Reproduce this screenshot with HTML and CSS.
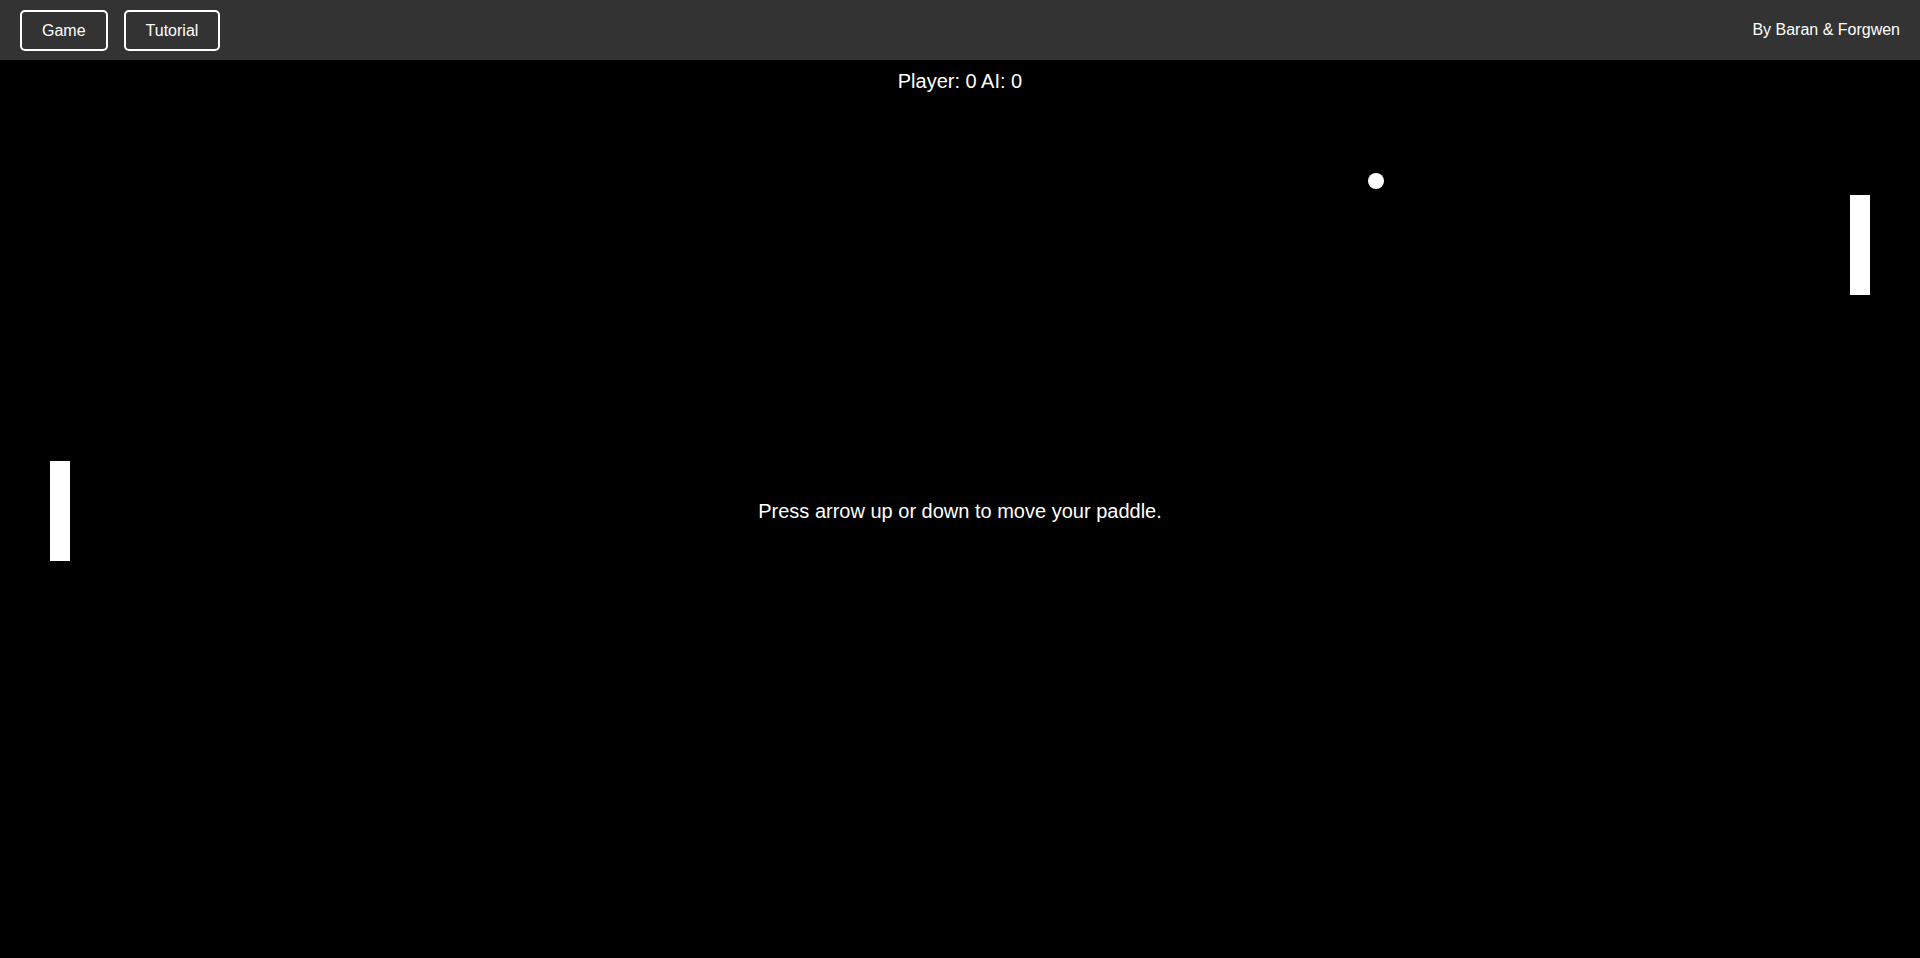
FILE: index.html
```html
<!DOCTYPE html>
<html lang="en">
<head>
<meta charset="utf-8">
<title>Pong</title>
<link rel="stylesheet" href="styles.css">
</head>
<body>
<header class="topbar">
  <nav class="nav">
    <button class="nav-btn">Game</button>
    <button class="nav-btn">Tutorial</button>
  </nav>
  <div class="credits">By Baran &amp; Forgwen</div>
</header>
<main class="game">
  <div class="score">Player: 0 AI: 0</div>
  <div class="paddle paddle-left"></div>
  <div class="paddle paddle-right"></div>
  <div class="ball"></div>
  <div class="hint">Press arrow up or down to move your paddle.</div>
</main>
</body>
</html>
```

FILE: styles.css
```css
html, body {
  margin: 0;
  padding: 0;
}
body {
  background: #000;
  color: #fff;
  font-family: "Liberation Sans", Arial, sans-serif;
  overflow: hidden;
}
.topbar {
  height: 60px;
  background: #333;
  display: flex;
  align-items: center;
  justify-content: space-between;
  padding: 0 20px;
  box-sizing: border-box;
}
.nav {
  display: flex;
  gap: 16px;
}
.nav-btn {
  background: transparent;
  color: #fff;
  border: 2px solid #fff;
  border-radius: 5px;
  padding: 10px 20px;
  font-family: "Liberation Sans", Arial, sans-serif;
  font-size: 16px;
  line-height: 17px;
  cursor: pointer;
}
.credits {
  font-size: 16px;
  line-height: 18px;
}
.game {
  position: relative;
  height: calc(100vh - 60px);
  overflow: hidden;
}
.score {
  text-align: center;
  font-size: 20px;
  line-height: 23px;
  padding-top: 10px;
}
.paddle {
  position: absolute;
  width: 20px;
  height: 100px;
  background: #fff;
}
.paddle-left {
  left: 50px;
  top: 401px;
}
.paddle-right {
  left: 1850px;
  top: 135px;
}
.ball {
  position: absolute;
  width: 16px;
  height: 16px;
  border-radius: 50%;
  background: #fff;
  left: 1368px;
  top: 113px;
}
.hint {
  position: absolute;
  left: 0;
  right: 0;
  top: 440px;
  text-align: center;
  font-size: 20px;
  line-height: 23px;
}
```
